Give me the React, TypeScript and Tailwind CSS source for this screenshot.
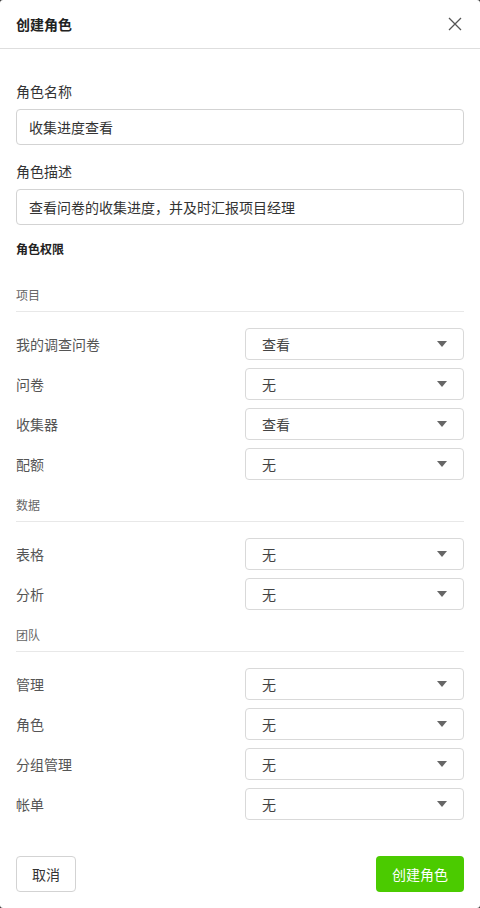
import React from "react";

const font = { fontFamily: '"Noto Sans CJK SC", "Noto Sans", sans-serif' };

function Select({ value }: { value: string }) {
  return (
    <div className="w-[219px] h-8 border border-[#d9d9d9] rounded-[4px] flex items-center justify-between pl-4 pr-[16px] text-[14px] text-[#444]">
      <span>{value}</span>
      <svg width="10" height="6" viewBox="0 0 10 6">
        <path d="M0 0 L10 0 L5 6 Z" fill="#666" />
      </svg>
    </div>
  );
}

function Section({ title, rows, first }: { title: string; rows: [string, string][]; first?: boolean }) {
  return (
    <div className={first ? "mt-[26px]" : "mt-[15px]"}>
      <div className="text-[12px] leading-5 text-[#666] pb-[6px] border-b border-[#e8e8e8]">{title}</div>
      <div className="mt-4 flex flex-col gap-2">
        {rows.map(([l, v]) => (
          <div key={l} className="flex items-center justify-between h-8">
            <span className="text-[14px] text-[#555]">{l}</span>
            <Select value={v} />
          </div>
        ))}
      </div>
    </div>
  );
}

export default function App() {
  return (
    <div className="w-[480px] h-[908px] bg-[#333]" style={font}>
      <div className="w-[480px] h-[908px] bg-white rounded-[3px] flex flex-col">
        <div className="h-[49px] border-b border-[#dedede] flex items-center justify-between px-4 shrink-0">
          <span className="text-[14px] font-bold text-[#222]">创建角色</span>
          <svg width="14" height="14" viewBox="0 0 14 14" className="mr-[2px]">
            <path d="M1 1 L13 13 M13 1 L1 13" stroke="#555" strokeWidth="1.3" />
          </svg>
        </div>
        <div className="px-4 pt-[31px] flex-1">
          <div className="text-[14px] leading-[22px] text-[#333]">角色名称</div>
          <div className="mt-[7px] h-9 border border-[#d3d3d3] rounded-[4px] flex items-center px-3 text-[14px] text-[#333]">收集进度查看</div>
          <div className="mt-[15px] text-[14px] leading-[22px] text-[#333]">角色描述</div>
          <div className="mt-[7px] h-9 border border-[#d3d3d3] rounded-[4px] flex items-center px-3 text-[14px] text-[#333]">查看问卷的收集进度，并及时汇报项目经理</div>
          <div className="mt-[14px] text-[12px] leading-5 font-bold text-[#222]">角色权限</div>
          <Section
            first
            title="项目"
            rows={[
              ["我的调查问卷", "查看"],
              ["问卷", "无"],
              ["收集器", "查看"],
              ["配额", "无"],
            ]}
          />
          <Section
            title="数据"
            rows={[
              ["表格", "无"],
              ["分析", "无"],
            ]}
          />
          <Section
            title="团队"
            rows={[
              ["管理", "无"],
              ["角色", "无"],
              ["分组管理", "无"],
              ["帐单", "无"],
            ]}
          />
        </div>
        <div className="px-4 pb-4 flex justify-between shrink-0">
          <button className="w-[60px] h-9 border border-[#d3d3d3] rounded-[4px] text-[14px] text-[#333] bg-white">取消</button>
          <button className="w-[88px] h-9 rounded-[4px] text-[14px] text-white bg-[#4bcb00]">创建角色</button>
        </div>
      </div>
    </div>
  );
}
